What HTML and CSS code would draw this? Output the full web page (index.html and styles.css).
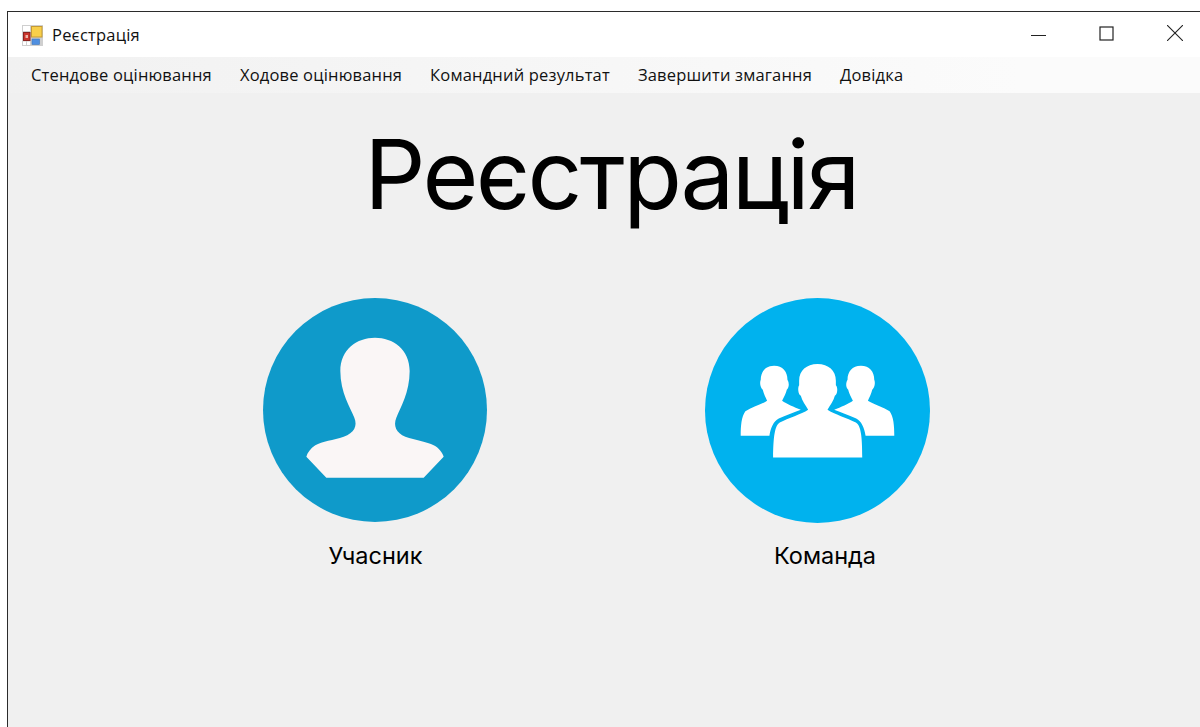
FILE: index.html
```html
<!DOCTYPE html>
<html lang="uk">
<head>
<meta charset="utf-8">
<title>Реєстрація</title>
<link rel="stylesheet" href="styles.css">
</head>
<body>
<div class="window">
  <header class="titlebar">
    <svg class="app-icon" viewBox="0 0 21 21" aria-hidden="true">
      <rect width="21" height="21" fill="#cfcfcf"/>
      <rect x="1" y="1" width="7" height="5" fill="#fff"/>
      <rect x="1" y="16.500" width="3" height="3.500" fill="#fff"/>
      <rect x="5" y="16.500" width="3" height="3.500" fill="#fff"/>
      <rect x="9.500" y="1.500" width="10.500" height="10.500" fill="#f8cf4a" stroke="#c49a35"/>
      <rect x="1.500" y="7.500" width="6.500" height="8" fill="#c9352c" stroke="#8b2320"/>
      <rect x="3.500" y="10" width="2.500" height="3" fill="#eeb4a8"/>
      <rect x="10" y="14" width="7.500" height="5.500" fill="#4f8fe0" stroke="#3f77bb" stroke-width=".6"/>
    </svg>
    <span class="window-title">Реєстрація</span>
    <div class="window-controls">
      <svg class="control control-min" viewBox="0 0 15 15" aria-hidden="true"><path d="M0 9.500H15" stroke="#222" fill="none"/></svg>
      <svg class="control control-max" viewBox="0 0 15 15" aria-hidden="true"><rect x="1" y="1" width="13" height="13" stroke="#222" stroke-width="1.200" fill="none"/></svg>
      <svg class="control" viewBox="0 0 16 16" aria-hidden="true"><path d="M0 0L16 16M16 0L0 16" stroke="#222" stroke-width="1.100" fill="none"/></svg>
    </div>
  </header>
  <nav class="menubar">
    <a class="menu-item">Стендове оцінювання</a>
    <a class="menu-item">Ходове оцінювання</a>
    <a class="menu-item">Командний результат</a>
    <a class="menu-item">Завершити змагання</a>
    <a class="menu-item">Довідка</a>
  </nav>
  <main class="content">
    <h1 class="heading">Реєстрація</h1>
    <div class="choices">
      <div class="choice">
        <svg class="avatar" viewBox="38 36 672 672" aria-hidden="true">
          <circle cx="374" cy="372" r="336" fill="#0f9aca"/>
          <path fill="#faf6f6" d="M374 155C320 155 270 190 270 255C270 320 300 365 312 395C322 420 312 440 280 452C250 463 215 465 195 478C180 488 172 500 168 512L228 575H520L580 512C576 500 566 486 550 478C530 466 495 463 465 452C438 440 428 420 438 395C450 365 478 320 478 255C478 190 428 155 374 155Z"/>
        </svg>
        <span class="choice-label choice-label-person">Учасник</span>
      </div>
      <div class="choice">
        <svg class="avatar avatar-team" viewBox="31 37 674 674" aria-hidden="true">
          <circle cx="368" cy="374" r="337" fill="#00b2ee"/>
          <path fill="#fff" d="M368 235C335 235 313 255 313 285V298C308 305 310 325 318 330C322 345 332 358 340 372C320 385 280 398 255 410C240 420 236 450 235 515H502C502 450 498 420 483 410C457 398 418 385 398 372C406 358 416 345 420 330C428 325 430 305 423 298V285C423 255 401 235 368 235Z"/>
          <path fill="#fff" d="M238 240C212 240 198 258 198 282C194 292 197 305 204 312C207 325 213 335 217 345C200 356 172 364 152 376C140 392 138 420 138 450H224C228 425 236 407 252 398C272 390 298 380 318 372C298 364 275 354 262 345C268 332 274 322 276 312C283 305 284 292 278 282C278 258 264 240 238 240Z"/>
          <path fill="#fff" d="M498 240C472 240 458 258 458 282C452 292 453 305 460 312C462 322 468 332 474 345C461 354 438 364 418 372C438 380 464 390 484 398C500 407 508 425 512 450H598C598 420 596 392 584 376C564 364 536 356 519 345C523 335 529 325 532 312C539 305 542 292 538 282C538 258 524 240 498 240Z"/>
        </svg>
        <span class="choice-label choice-label-team">Команда</span>
      </div>
    </div>
  </main>
</div>
</body>
</html>
```
FILE: styles.css
```css
* {
  box-sizing: border-box;
}

html,
body {
  margin: 0;
  height: 100%;
  overflow: hidden;
  background: #fff;
}

.window {
  display: flex;
  flex-direction: column;
  height: 716px;
  margin: 11px 0 0 7px;
  border-top: 1px solid #2b2b2b;
  border-left: 1px solid #2b2b2b;
  color: #000;
  font-family: "Open Sans", "Noto Sans", sans-serif;
}

.titlebar {
  display: flex;
  align-items: center;
  flex: 0 0 45px;
  padding-left: 14px;
  background: #fff;
}

.app-icon {
  width: 21px;
  height: 21px;
  margin-top: 1px;
}

.window-title {
  margin-left: 9px;
  font-size: 16.500px;
  letter-spacing: 0.2px;
  color: #111;
}

.window-controls {
  display: flex;
  align-items: center;
  gap: 53px;
  margin-left: auto;
  margin-top: -3px;
  padding-right: 17px;
}

.control {
  width: 16px;
  height: 16px;
}

.control-min,
.control-max {
  width: 15px;
  height: 15px;
}

.menubar {
  display: flex;
  align-items: center;
  flex: 0 0 36px;
  gap: 28px;
  padding-left: 23px;
  padding-bottom: 1px;
  background: linear-gradient(to right, #f1f1f1, #fbfbfb 85%);
}

.menu-item {
  font-size: 16.500px;
  letter-spacing: 0.18px;
  color: #111;
}

.content {
  flex: 1;
  background: #f0f0f0;
}

.heading {
  margin: 0;
  padding-top: 24px;
  padding-left: 14px;
  font-family: Inter, sans-serif;
  font-size: 96px;
  font-feature-settings: "ss07";
  font-weight: 400;
  letter-spacing: -2.600px;
  line-height: 115px;
  text-align: center;
}

.choices {
  display: flex;
  gap: 218px;
  margin-top: 66px;
  padding-left: 255px;
}

.choice {
  display: flex;
  flex-direction: column;
  align-items: center;
  width: 224px;
}

.avatar {
  width: 224px;
  height: 224px;
}

.avatar-team {
  width: 225px;
  height: 225px;
  margin-bottom: -1px;
}

.choice-label {
  margin-top: 18px;
  font-family: Inter, sans-serif;
  font-size: 23.500px;
  line-height: 32px;
}

.choice-label-person {
  padding-left: 1px;
}

.choice-label-team {
  padding-left: 16px;
}
```
